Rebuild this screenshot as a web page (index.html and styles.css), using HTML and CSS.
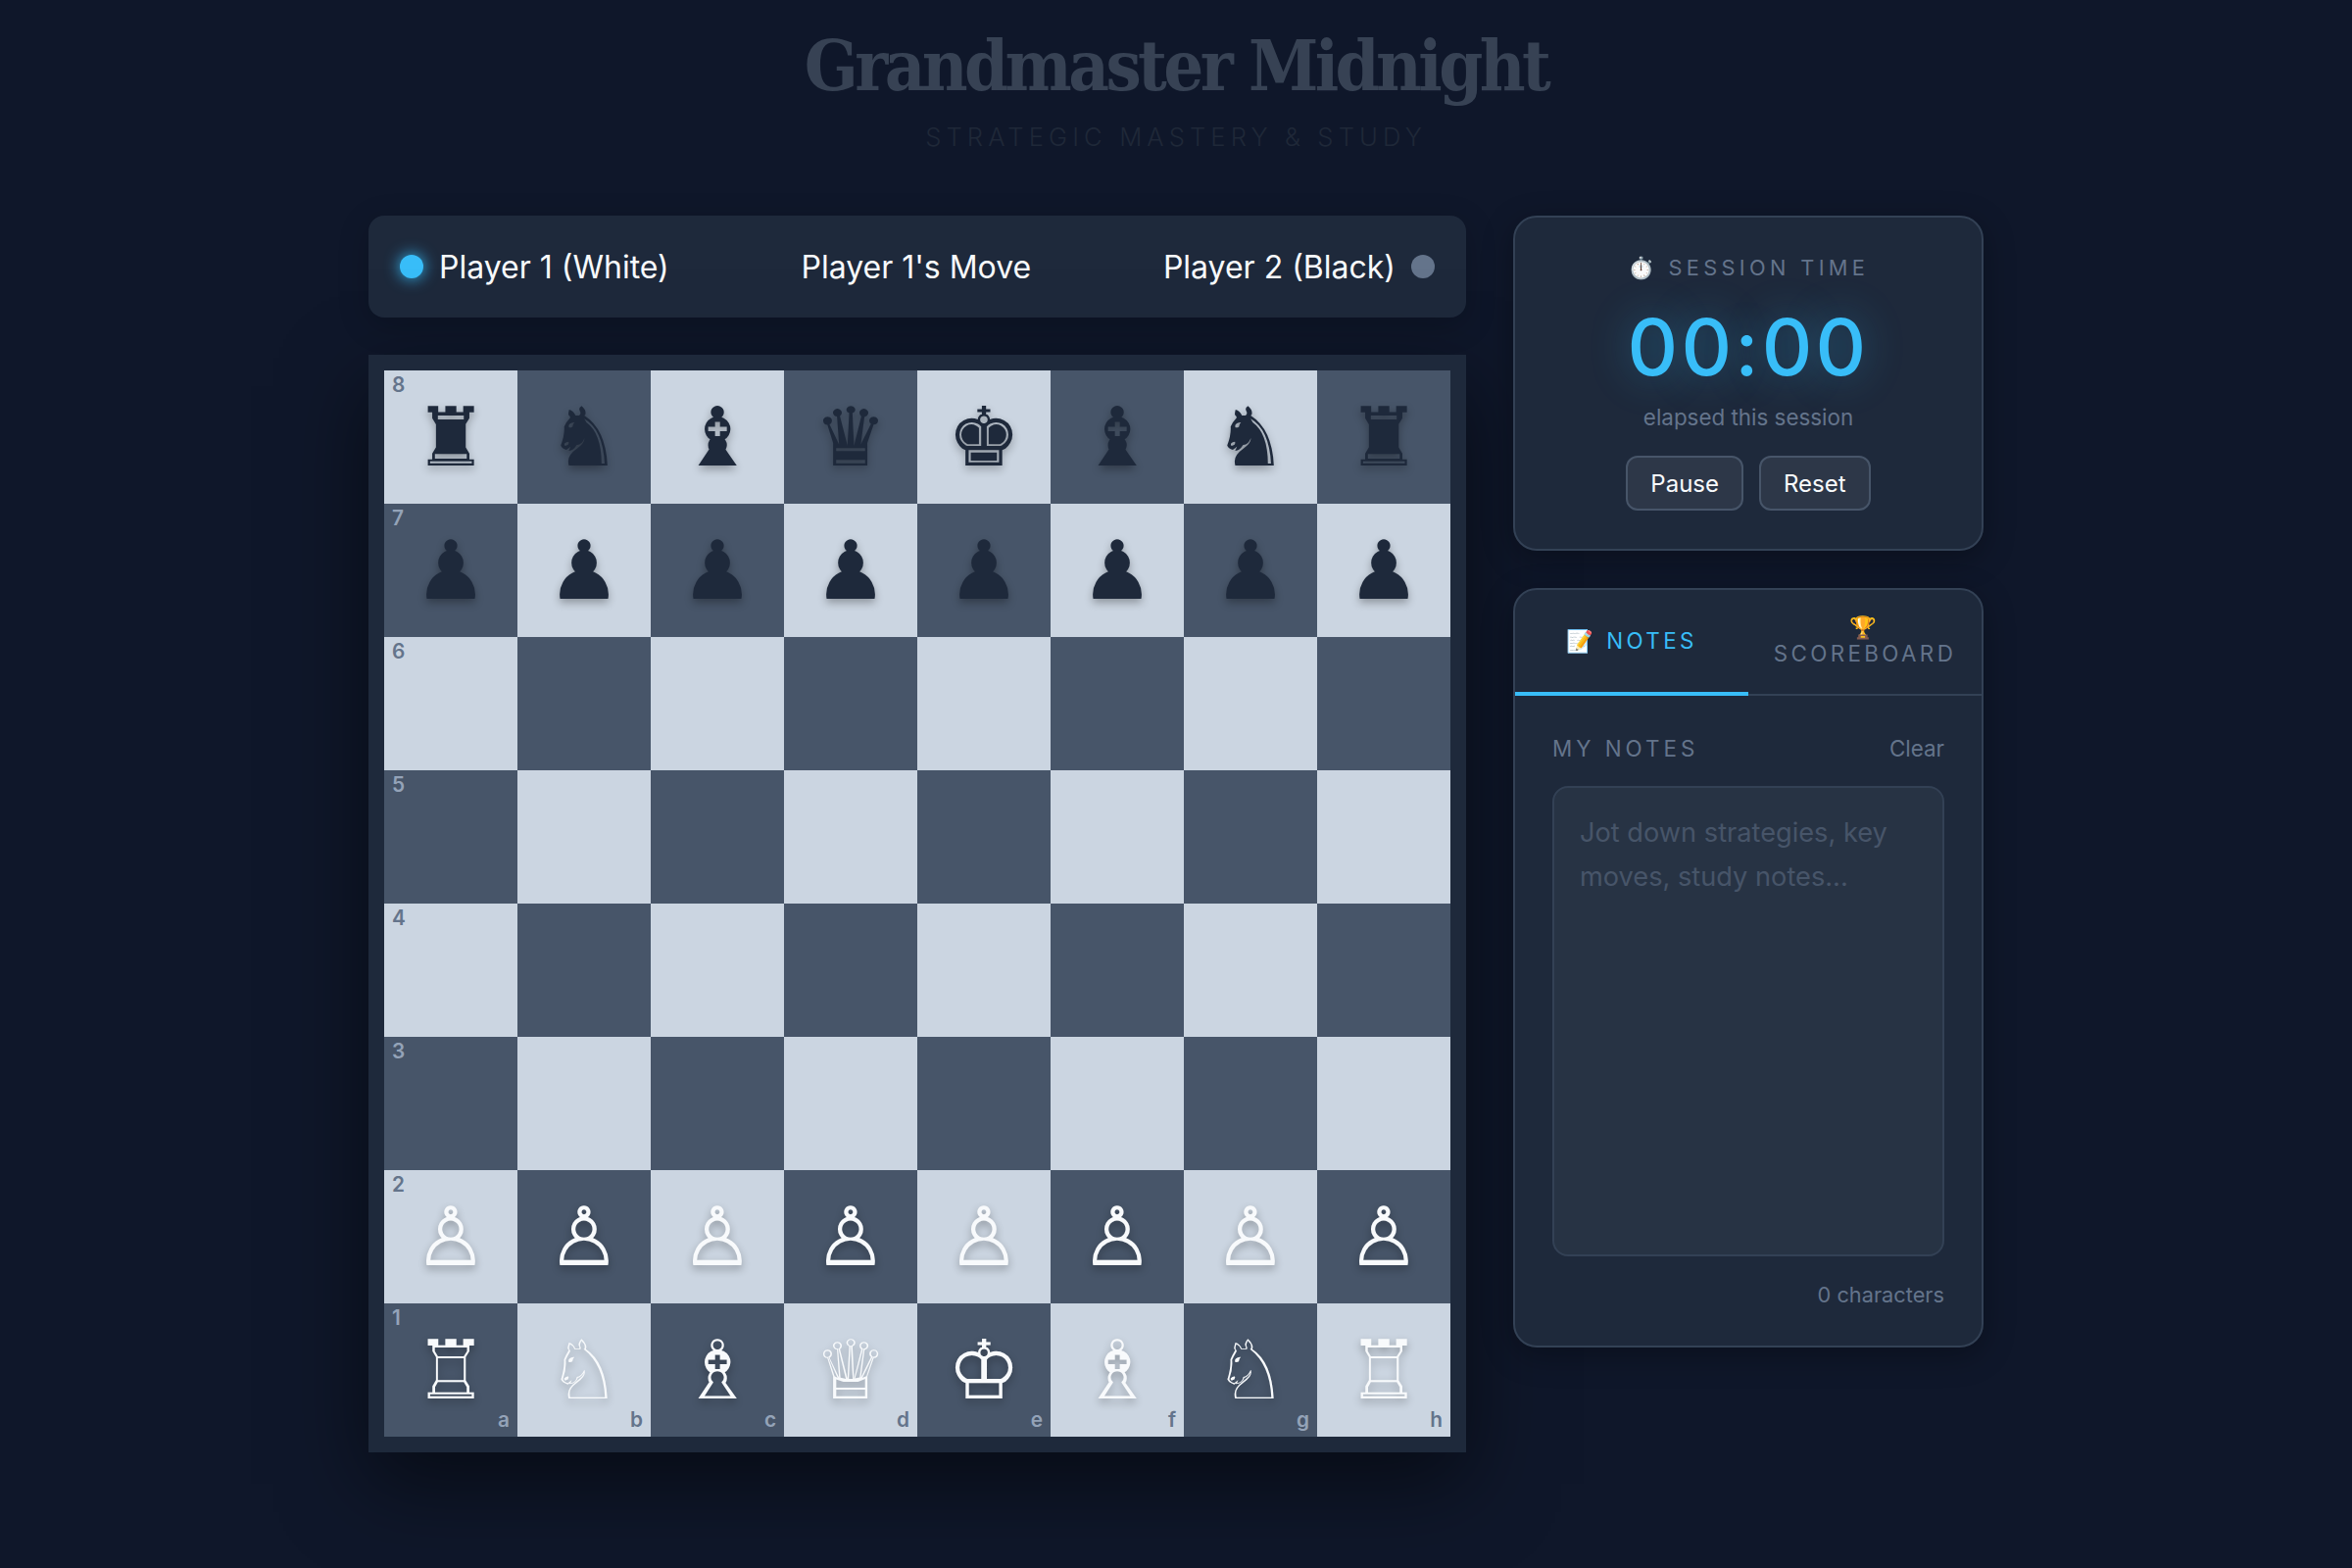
FILE: index.html
```html
<!DOCTYPE html>
<html lang="en">
<head>
<meta charset="utf-8">
<title>Grandmaster Midnight</title>
<link rel="stylesheet" href="styles.css">
</head>
<body>
<header class="masthead">
  <h1 class="title">Grandmaster Midnight</h1>
  <p class="subtitle">STRATEGIC MASTERY &amp; STUDY</p>
</header>
<main class="layout">
  <section class="game">
    <div class="status">
      <div class="player"><span class="dot dot-active"></span><span>Player 1 (White)</span></div>
      <div class="turn">Player 1's Move</div>
      <div class="player"><span>Player 2 (Black)</span><span class="dot"></span></div>
    </div>
    <div class="board">
      <div class="sq light"><span class="rank">8</span><span class="pc b">♜</span></div>
      <div class="sq dark"><span class="pc b">♞</span></div>
      <div class="sq light"><span class="pc b">♝</span></div>
      <div class="sq dark"><span class="pc b">♛</span></div>
      <div class="sq light"><span class="pc b">♚</span></div>
      <div class="sq dark"><span class="pc b">♝</span></div>
      <div class="sq light"><span class="pc b">♞</span></div>
      <div class="sq dark"><span class="pc b">♜</span></div>

      <div class="sq dark"><span class="rank">7</span><span class="pc b">♟</span></div>
      <div class="sq light"><span class="pc b">♟</span></div>
      <div class="sq dark"><span class="pc b">♟</span></div>
      <div class="sq light"><span class="pc b">♟</span></div>
      <div class="sq dark"><span class="pc b">♟</span></div>
      <div class="sq light"><span class="pc b">♟</span></div>
      <div class="sq dark"><span class="pc b">♟</span></div>
      <div class="sq light"><span class="pc b">♟</span></div>

      <div class="sq light"><span class="rank">6</span></div>
      <div class="sq dark"></div><div class="sq light"></div><div class="sq dark"></div>
      <div class="sq light"></div><div class="sq dark"></div><div class="sq light"></div><div class="sq dark"></div>

      <div class="sq dark"><span class="rank">5</span></div>
      <div class="sq light"></div><div class="sq dark"></div><div class="sq light"></div>
      <div class="sq dark"></div><div class="sq light"></div><div class="sq dark"></div><div class="sq light"></div>

      <div class="sq light"><span class="rank">4</span></div>
      <div class="sq dark"></div><div class="sq light"></div><div class="sq dark"></div>
      <div class="sq light"></div><div class="sq dark"></div><div class="sq light"></div><div class="sq dark"></div>

      <div class="sq dark"><span class="rank">3</span></div>
      <div class="sq light"></div><div class="sq dark"></div><div class="sq light"></div>
      <div class="sq dark"></div><div class="sq light"></div><div class="sq dark"></div><div class="sq light"></div>

      <div class="sq light"><span class="rank">2</span><span class="pc w">♙</span></div>
      <div class="sq dark"><span class="pc w">♙</span></div>
      <div class="sq light"><span class="pc w">♙</span></div>
      <div class="sq dark"><span class="pc w">♙</span></div>
      <div class="sq light"><span class="pc w">♙</span></div>
      <div class="sq dark"><span class="pc w">♙</span></div>
      <div class="sq light"><span class="pc w">♙</span></div>
      <div class="sq dark"><span class="pc w">♙</span></div>

      <div class="sq dark"><span class="rank">1</span><span class="pc w">♖</span><span class="file">a</span></div>
      <div class="sq light"><span class="pc w">♘</span><span class="file">b</span></div>
      <div class="sq dark"><span class="pc w">♗</span><span class="file">c</span></div>
      <div class="sq light"><span class="pc w">♕</span><span class="file">d</span></div>
      <div class="sq dark"><span class="pc w">♔</span><span class="file">e</span></div>
      <div class="sq light"><span class="pc w">♗</span><span class="file">f</span></div>
      <div class="sq dark"><span class="pc w">♘</span><span class="file">g</span></div>
      <div class="sq light"><span class="pc w">♖</span><span class="file">h</span></div>
    </div>
  </section>
  <aside class="side">
    <section class="card timer">
      <div class="timer-label">⏱️ SESSION TIME</div>
      <div class="timer-value">00:00</div>
      <div class="timer-note">elapsed this session</div>
      <div class="timer-actions">
        <button class="btn">Pause</button>
        <button class="btn">Reset</button>
      </div>
    </section>
    <section class="card notes">
      <div class="tabs">
        <button class="tab tab-active">📝 NOTES</button>
        <button class="tab">🏆 SCOREBOARD</button>
      </div>
      <div class="notes-body">
        <div class="notes-head">
          <span class="notes-title">MY NOTES</span>
          <button class="clear">Clear</button>
        </div>
        <textarea class="notes-input" placeholder="Jot down strategies, key moves, study notes..."></textarea>
        <div class="count">0 characters</div>
      </div>
    </section>
  </aside>
</main>
</body>
</html>
```
FILE: styles.css
```css
* { box-sizing: border-box; }
html, body { margin: 0; height: 100%; }
body {
  background: #0f172a;
  color: #f8fafc;
  font-family: "Inter", "Liberation Sans", sans-serif;
  min-height: 1600px;
  overflow: hidden;
}
.masthead { text-align: center; padding-top: 25px; height: 220px; }
.title {
  margin: 0;
  font-family: "DejaVu Serif Condensed", "DejaVu Serif", serif;
  font-weight: 700;
  font-size: 71.68px;
  line-height: 84px;
  letter-spacing: -3.6px;
  color: #374254;
}
.subtitle {
  margin: 15px 0 0;
  font-size: 25.6px;
  font-weight: 300;
  line-height: 32px;
  letter-spacing: 5.12px;
  color: #1f2838;
}
.layout { display: flex; justify-content: center; gap: 48px; align-items: flex-start; }
.game { width: 1120px; display: flex; flex-direction: column; gap: 38.4px; }
.status {
  height: 104px;
  padding: 0 32px;
  background: #1e293b;
  border-radius: 16px;
  display: flex;
  align-items: center;
  justify-content: space-between;
  font-size: 32px;
  box-shadow: 0 8px 32px rgba(0,0,0,.2);
}
.player { display: flex; align-items: center; gap: 16px; }
.dot { width: 24px; height: 24px; border-radius: 50%; background: #64748b; }
.dot-active { background: #38bdf8; box-shadow: 0 0 16px #38bdf8; }
.board {
  padding: 16px;
  background: #1e293b;
  display: grid;
  grid-template-columns: repeat(8, 136px);
  grid-auto-rows: 136px;
  box-shadow: 0 32px 80px rgba(0,0,0,.5);
}
.sq { position: relative; display: flex; align-items: center; justify-content: center; }
.light { background: #cbd5e1; }
.dark { background: #475569; }
.pc {
  padding-top: 1px;
  font-family: "DejaVu Sans", sans-serif;
  font-size: 83.2px;
  line-height: 1;
  text-shadow: 0 4px 8px rgba(0,0,0,.3);
}
.b { color: #1e293b; }
.w { color: #f8fafc; }
.rank, .file { position: absolute; font-size: 20.8px; font-weight: 600; line-height: 24px; }
.rank { top: 3px; left: 8px; }
.file { bottom: 5px; right: 8px; }
.light .rank, .light .file { color: #64748b; }
.dark .rank, .dark .file { color: #94a3b8; }
.side { width: 480px; display: flex; flex-direction: column; gap: 38.4px; }
.card {
  background: #1e293b;
  border: 2px solid #334155;
  border-radius: 24px;
  box-shadow: 0 8px 32px rgba(0,0,0,.3);
}
.timer { height: 342px; padding-top: 36px; text-align: center; }
.timer-label { font-size: 21.76px; line-height: 30px; letter-spacing: 4.35px; color: #64748b; }
.timer-value {
  margin-top: 18px;
  font-size: 80px;
  font-weight: 500;
  line-height: 96px;
  letter-spacing: 3.2px;
  color: #38bdf8;
  text-shadow: 0 0 40px rgba(56,189,248,.4);
}
.timer-note { margin-top: 9px; font-size: 22.4px; line-height: 30px; color: #64748b; }
.timer-actions { display: flex; justify-content: center; gap: 16px; margin-top: 24px; }
.btn {
  height: 56px;
  padding: 0 23px;
  background: #2d3748;
  border: 2px solid #475569;
  border-radius: 12px;
  color: #f8fafc;
  font: 400 24px "Inter", sans-serif;
}
.notes { height: 775px; overflow: hidden; }
.tabs { display: flex; height: 108px; border-bottom: 2px solid #334155; }
.tab {
  flex: 1;
  height: 108px;
  padding: 16px 16px 18px;
  background: none;
  border: 0;
  border-bottom: 4px solid transparent;
  font: 400 22.4px "Inter", sans-serif;
  letter-spacing: 3.36px;
  color: #64748b;
}
.tab-active { color: #38bdf8; border-bottom-color: #38bdf8; }
.notes-body { padding: 38px 38px 0; }
.notes-head { display: flex; justify-content: space-between; align-items: center; height: 30px; }
.notes-title { font-size: 22.4px; letter-spacing: 4px; color: #64748b; }
.clear { background: none; border: 0; padding: 0; font: 400 22.4px "Inter", sans-serif; color: #64748b; }
.notes-input {
  display: block;
  width: 100%;
  height: 480px;
  margin-top: 24px;
  padding: 24px 26px;
  background: #273344;
  border: 2px solid #334155;
  border-radius: 16px;
  font: 400 27.2px/44.8px "Inter", sans-serif;
  color: #f8fafc;
  resize: none;
  outline: none;
}
.notes-input::placeholder { color: #475569; opacity: 1; }
.count { margin-top: 24px; text-align: right; font-size: 21.76px; line-height: 30px; color: #64748b; }
```
